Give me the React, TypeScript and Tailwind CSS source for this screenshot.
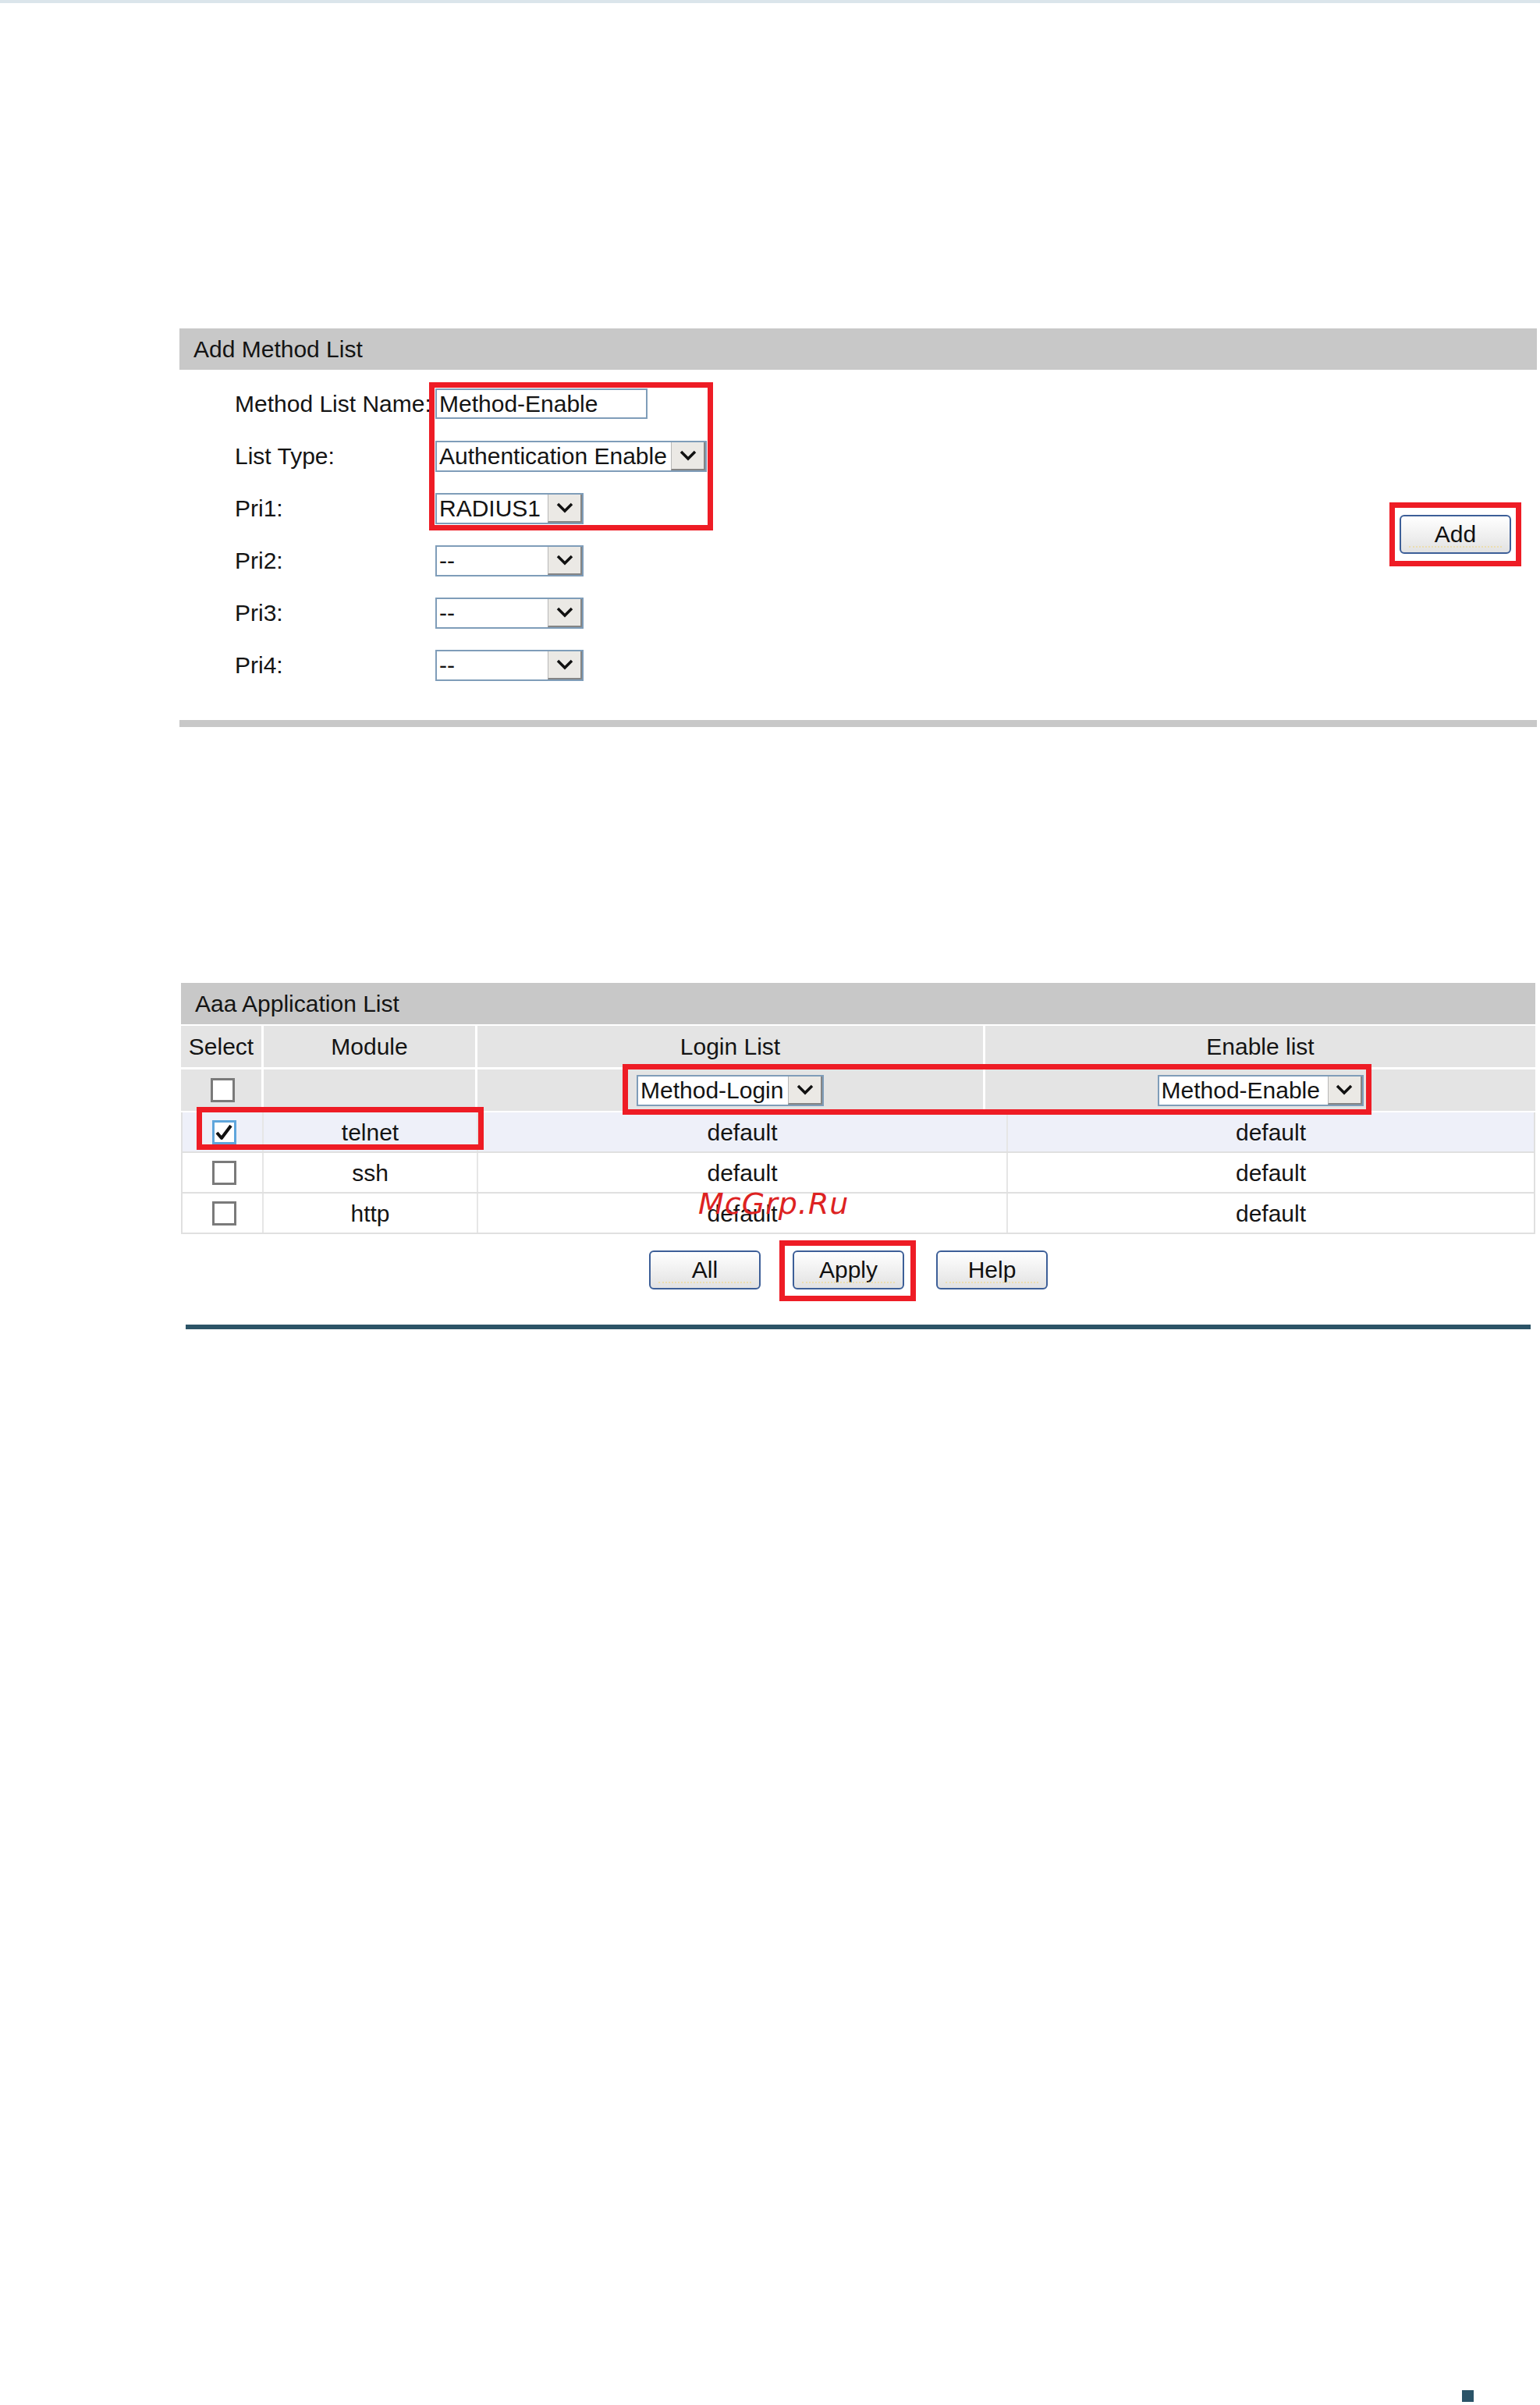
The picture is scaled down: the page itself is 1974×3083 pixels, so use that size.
import React from 'react';

const FONT = "font-['Liberation_Sans',Arial,sans-serif]";

interface DropdownProps {
  value: string;
  width: string;
}

// Classic boxed select with the grey chevron button on the right
const Dropdown: React.FC<DropdownProps> = ({ value, width }) => (
  <div className={`${width} h-[40px] flex border-2 border-[#7f9db9] bg-white`}>
    <span className="flex-1 flex items-center pl-[3px] text-[30px] leading-none whitespace-nowrap overflow-hidden">
      {value}
    </span>
    <span className="w-[44px] flex items-center justify-center bg-[#ebe9e5] border-l border-[#b8b8b8] border-r-2 border-b-2 border-r-[#858585] border-b-[#858585]">
      <svg width="22" height="14" viewBox="0 0 22 14">
        <polyline points="2,2 11,11 20,2" fill="none" stroke="#111" strokeWidth="3.5" />
      </svg>
    </span>
  </div>
);

interface CheckBoxProps {
  checked?: boolean;
}

const CheckBox: React.FC<CheckBoxProps> = ({ checked }) => (
  <div
    className={`w-[31px] h-[31px] bg-white border-[3px] flex items-center justify-center ${
      checked ? 'border-[#5fa6dc]' : 'border-[#7a7a7a]'
    }`}
  >
    {checked && (
      <svg width="24" height="22" viewBox="0 0 24 22">
        <path d="M3 12 L9 19 L21 3" fill="none" stroke="#111" strokeWidth="4" strokeLinejoin="round" />
      </svg>
    )}
  </div>
);

const PanelButton: React.FC<{ label: string }> = ({ label }) => (
  <button className="relative w-[143px] h-[50px] rounded-[6px] border-2 border-[#3d5f98] bg-gradient-to-b from-white to-[#e2e2e2] text-[30px] text-[#111] leading-none">
    {label}
    <span className="absolute left-[10px] right-[10px] bottom-[6px] border-b-2 border-dotted border-[#f0d88a]/60" />
  </button>
);

const RedFrame: React.FC<{ className: string }> = ({ className }) => (
  <div className={`absolute border-[7px] border-[#ee1c25] pointer-events-none ${className}`} />
);

const formRows = [
  { label: 'Method List Name:', control: (
    <div className="w-[272px] h-[39px] border-2 border-[#7f9db9] bg-white flex items-center pl-[3px] text-[30px] leading-none">
      Method-Enable
    </div>
  ) },
  { label: 'List Type:', control: <Dropdown value="Authentication Enable" width="w-[348px]" /> },
  { label: 'Pri1:', control: <Dropdown value="RADIUS1" width="w-[190px]" /> },
  { label: 'Pri2:', control: <Dropdown value="--" width="w-[190px]" /> },
  { label: 'Pri3:', control: <Dropdown value="--" width="w-[190px]" /> },
  { label: 'Pri4:', control: <Dropdown value="--" width="w-[190px]" /> },
];

const modules = [
  { name: 'telnet', checked: true },
  { name: 'ssh', checked: false },
  { name: 'http', checked: false },
];

const App: React.FC = () => {
  return (
    <div className={`${FONT} min-h-[3083px] bg-white flex flex-col text-[#141414]`}>
      <div className="h-[4px] bg-[#dbe5eb]" />

      {/* Add Method List */}
      <section className="ml-[230px] mt-[417px] w-[1740px]">
        <div className="h-[53px] bg-[#c8c8c8] flex items-center pl-[18px] text-[30px]">Add Method List</div>

        <div className="relative flex pt-[10px]">
          <div className="flex flex-col">
            {formRows.map((row) => (
              <div key={row.label} className="h-[67px] flex items-center">
                <span className="w-[257px] pl-[71px] box-content text-[30px] whitespace-nowrap">{row.label}</span>
                {row.control}
              </div>
            ))}
          </div>
          <div className="flex-1 flex items-center justify-end pr-[20px]">
            <div className="border-[7px] border-[#ee1c25] px-[6px] py-[9px]">
              <PanelButton label="Add" />
            </div>
          </div>
          <RedFrame className="left-[320px] top-[16px] w-[364px] h-[190px]" />
        </div>

        <div className="mt-[37px] h-[9px] bg-[#c8c8c8]" />
      </section>

      {/* Aaa Application List */}
      <section className="relative ml-[232px] mt-[328px] w-[1736px]">
        <div className="h-[53px] bg-[#c8c8c8] flex items-center pl-[18px] text-[30px]">Aaa Application List</div>

        <div className="mt-[2px] grid grid-cols-[103px_271px_648px_705px] gap-[3px] bg-white text-[30px]">
          <div className="h-[53px] bg-[#e4e4e4] flex items-center justify-center">Select</div>
          <div className="h-[53px] bg-[#e4e4e4] flex items-center justify-center">Module</div>
          <div className="h-[53px] bg-[#e4e4e4] flex items-center justify-center">Login List</div>
          <div className="h-[53px] bg-[#e4e4e4] flex items-center justify-center">Enable list</div>

          <div className="h-[53px] bg-[#e4e4e4] flex items-center justify-center pl-[3px]">
            <CheckBox />
          </div>
          <div className="h-[53px] bg-[#e4e4e4]" />
          <div className="h-[53px] bg-[#e4e4e4] flex items-center justify-center">
            <Dropdown value="Method-Login" width="w-[240px]" />
          </div>
          <div className="h-[53px] bg-[#e4e4e4] flex items-center justify-center">
            <Dropdown value="Method-Enable" width="w-[264px]" />
          </div>
        </div>

        <div className="mt-[2px] border-x-2 border-[#e0e0e0] text-[30px]">
          {modules.map((m) => (
            <div
              key={m.name}
              className={`h-[52px] grid grid-cols-[102px_275px_679px_1fr] border-b-2 border-[#e0e0e0] ${
                m.checked ? 'bg-[#eef0f9]' : 'bg-white'
              }`}
            >
              <div className="flex items-center justify-center pl-[4px]">
                <CheckBox checked={m.checked} />
              </div>
              <div className="flex items-center justify-center border-l-2 border-[#e6e6e6]">{m.name}</div>
              <div className="flex items-center justify-center border-l-2 border-[#e6e6e6]">default</div>
              <div className="flex items-center justify-center border-l-2 border-[#e6e6e6]">default</div>
            </div>
          ))}
        </div>

        <div className="mt-[21px] pl-[600px] flex gap-[41px]">
          <PanelButton label="All" />
          <div className="relative">
            <PanelButton label="Apply" />
            <RedFrame className="left-[-17px] right-[-15px] top-[-13px] bottom-[-15px]" />
          </div>
          <PanelButton label="Help" />
        </div>

        <RedFrame className="left-[566px] top-[104px] w-[960px] h-[65px]" />
        <RedFrame className="left-[20px] top-[159px] w-[368px] h-[55px]" />

        <span className="absolute left-[663px] top-[264px] font-['DejaVu_Sans',sans-serif] italic text-[38px] tracking-[1px] leading-none text-[#dd2222]">
          McGrp.Ru
        </span>
      </section>

      <div className="ml-[238px] mt-[45px] w-[1724px] h-[6px] bg-[#2c5467]" />

      <div className="mt-auto flex justify-end pr-[85px] pb-[4px]">
        <div className="w-[15px] h-[15px] bg-[#2b5468]" />
      </div>
    </div>
  );
};

export default App;
